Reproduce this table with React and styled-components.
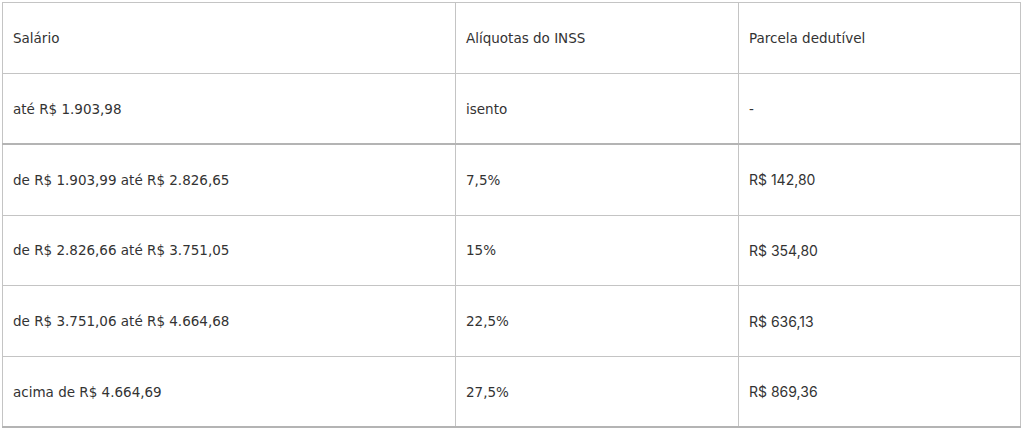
import React from 'react';
import styled, { createGlobalStyle } from 'styled-components';

const rows = [
  { salary: 'até R$ 1.903,98', rate: 'isento', deduction: '-' },
  { salary: 'de R$ 1.903,99 até R$ 2.826,65', rate: '7,5%', deduction: 'R$ 142,80' },
  { salary: 'de R$ 2.826,66 até R$ 3.751,05', rate: '15%', deduction: 'R$ 354,80' },
  { salary: 'de R$ 3.751,06 até R$ 4.664,68', rate: '22,5%', deduction: 'R$ 636,13' },
  { salary: 'acima de R$ 4.664,69', rate: '27,5%', deduction: 'R$ 869,36' },
];

const App = () => (
  <>
    <GlobalStyle />
    <Page>
      <Table>
        <colgroup>
          <col style={{ width: 453 }} />
          <col style={{ width: 283 }} />
          <col style={{ width: 282 }} />
        </colgroup>
        <thead>
          <tr>
            <HeadCell>Salário</HeadCell>
            <HeadCell>Alíquotas do INSS</HeadCell>
            <HeadCell>Parcela dedutível</HeadCell>
          </tr>
        </thead>
        <tbody>
          {rows.map((row, i) => (
            <Row key={row.salary} $strong={i === 1}>
              <Cell>{row.salary}</Cell>
              <Cell>{row.rate}</Cell>
              <Cell $alt={row.deduction !== '-'}>{row.deduction}</Cell>
            </Row>
          ))}
        </tbody>
      </Table>
    </Page>
  </>
);

const GlobalStyle = createGlobalStyle`
  body {
    margin: 0;
    background: #ffffff;
    font-family: 'DejaVu Sans', sans-serif;
  }
`;

const Page = styled.div`
  padding: 2px 0 0 2px;
`;

const Table = styled.table`
  width: 1019px;
  border-collapse: collapse;
  table-layout: fixed;
  border: 1px solid #c4c4c4;
  border-bottom: 2px solid #b4b4b4;
`;

const HeadCell = styled.th`
  height: 71px;
  box-sizing: border-box;
  padding: 0 10px;
  text-align: left;
  font-weight: 400;
  font-size: 13.5px;
  color: #333333;
  border: 1px solid #c4c4c4;
`;

const Row = styled.tr`
  td {
    border-top: ${props => (props.$strong ? '2px solid #b4b4b4' : '1px solid #c8c8c8')};
  }
`;

const Cell = styled.td`
  height: 70.75px;
  box-sizing: border-box;
  padding: 0 10px;
  color: #333333;
  border: 1px solid #c4c4c4;
  font-family: ${props => (props.$alt ? "'Inter', sans-serif" : "'DejaVu Sans', sans-serif")};
  font-size: ${props => (props.$alt ? '14px' : '13.5px')};
`;

export default App;
